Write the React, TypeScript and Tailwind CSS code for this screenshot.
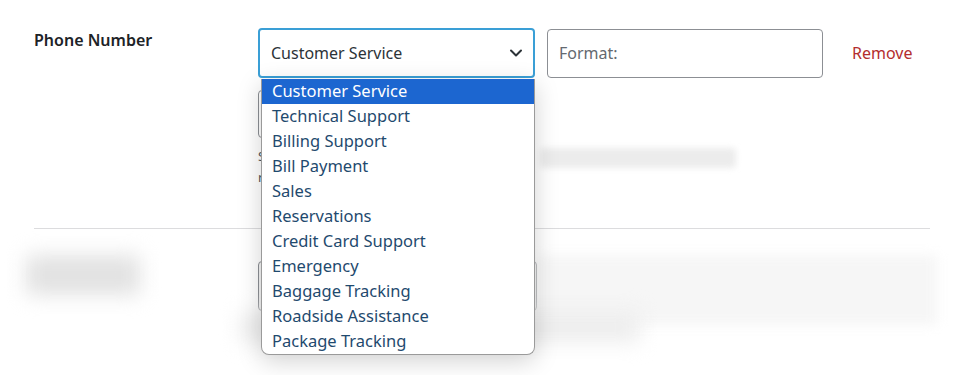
import React from "react";

const options = [
  "Customer Service",
  "Technical Support",
  "Billing Support",
  "Bill Payment",
  "Sales",
  "Reservations",
  "Credit Card Support",
  "Emergency",
  "Baggage Tracking",
  "Roadside Assistance",
  "Package Tracking",
];

const Chevron = () => (
  <svg width="16" height="16" viewBox="0 0 16 16" fill="none">
    <path d="M3 5.5l5 5 5-5" stroke="#2c3338" strokeWidth="2" strokeLinecap="round" strokeLinejoin="round" />
  </svg>
);

export default function App() {
  const selected = "Customer Service";

  return (
    <div className="relative w-[964px] h-[375px] overflow-hidden bg-white font-['Noto_Sans',sans-serif] text-[#2c3338]">
      {/* first row */}
      <div className="flex pl-[34px] pt-[28px]">
        <div className="w-[224px] text-[16px] font-semibold text-[#1d2327]">Phone Number</div>
        <div className="flex flex-col">
          <div className="flex items-center">
            <div className="flex h-[50px] w-[277px] items-center justify-between rounded-[4px] border-2 border-[#3a9fd6] pl-[11px] pr-[9px] text-[16px] text-[#2c3338]">
              <span>{selected}</span>
              <Chevron />
            </div>
            <div className="ml-[12px] flex h-[49px] w-[276px] items-center rounded-[4px] border border-[#8c8f94] pl-[11px] text-[16px] text-[#646970]">
              Format:
            </div>
            <a className="ml-[29px] text-[16px] text-[#b32d2e]">Remove</a>
          </div>
          <div className="mt-[12px] h-[48px] w-[277px] rounded-[4px] border border-[#8c8f94]" />
          <div className="relative mt-[8px] h-[48px] text-[13px] leading-[21px] text-[#50575e]">
            <p>S</p>
            <p>r</p>
            <div className="absolute left-[282px] top-[2px] h-[20px] w-[196px] rounded bg-[#ececec] blur-[3px]" />
          </div>
        </div>
      </div>

      {/* divider */}
      <div className="mx-[34px] mt-[34px] h-px bg-[#dcdcde]" />

      {/* second row, obscured */}
      <div className="flex pl-[26px] pt-[22px]">
        <div className="mt-[4px] h-[40px] w-[114px] rounded bg-[#e2e2e2] blur-[10px]" />
        <div className="ml-[118px] flex">
          <div className="mt-[10px] h-[50px] w-[279px] rounded-[4px] border border-[#8c8f94] bg-[#f4f4f4]" />
          <div className="mt-[4px] h-[70px] w-[400px] rounded bg-[#f6f6f6] blur-[6px]" />
        </div>
      </div>
      <div className="absolute left-[240px] top-[312px] h-[30px] w-[400px] rounded bg-[#ededed] blur-[10px]" />

      {/* open list */}
      <ul className="absolute left-[261px] top-[79px] w-[274px] overflow-hidden rounded-b-[8px] border border-t-0 border-[#9a9a9a] bg-white shadow-[0_6px_24px_rgba(0,0,0,0.18)]">
        {options.map((o) => (
          <li
            key={o}
            className={`h-[25px] pl-[10px] text-[16.5px] leading-[24px] ${
              o === selected ? "bg-[#1c66d0] text-white" : "text-[#1f4a6e]"
            }`}
          >
            {o}
          </li>
        ))}
      </ul>
    </div>
  );
}
